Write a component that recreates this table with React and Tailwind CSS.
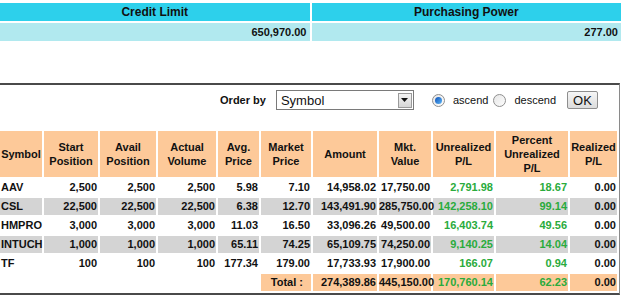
const rows = [
  ['AAV', '2,500', '2,500', '2,500', '5.98', '7.10', '14,958.02', '17,750.00', '2,791.98', '18.67', '0.00'],
  ['CSL', '22,500', '22,500', '22,500', '6.38', '12.70', '143,491.90', '285,750.00', '142,258.10', '99.14', '0.00'],
  ['HMPRO', '3,000', '3,000', '3,000', '11.03', '16.50', '33,096.26', '49,500.00', '16,403.74', '49.56', '0.00'],
  ['INTUCH', '1,000', '1,000', '1,000', '65.11', '74.25', '65,109.75', '74,250.00', '9,140.25', '14.04', '0.00'],
  ['TF', '100', '100', '100', '177.34', '179.00', '17,733.93', '17,900.00', '166.07', '0.94', '0.00'],
]

const headers = [
  ['Symbol'],
  ['Start', 'Position'],
  ['Avail', 'Position'],
  ['Actual', 'Volume'],
  ['Avg.', 'Price'],
  ['Market', 'Price'],
  ['Amount'],
  ['Mkt.', 'Value'],
  ['Unrealized', 'P/L'],
  ['Percent', 'Unrealized', 'P/L'],
  ['Realized', 'P/L'],
]

const widths = [42, 54, 56, 58, 41, 50, 64, 52, 61, 72, 47]

function Radio({ checked }) {
  return (
    <span className="flex h-[13px] w-[13px] items-center justify-center rounded-full border border-[#8f8f8f] bg-gradient-to-br from-[#e6e6e6] to-[#fdfdfd]">
      {checked && (
        <span className="h-[7px] w-[7px] rounded-full bg-gradient-to-br from-[#0f4fb8] to-[#5fb6f5]" />
      )}
    </span>
  )
}

export default function App() {
  return (
    <div className="w-[621px] bg-white pt-[3px] font-['Liberation_Sans',Arial,sans-serif] text-[#111]">
      <div className="grid grid-cols-2 gap-[2px] text-[12px] font-bold">
        <div className="flex h-[18px] items-center justify-center bg-[#2dd0eb]">Credit Limit</div>
        <div className="flex h-[18px] items-center justify-center bg-[#2dd0eb]">Purchasing Power</div>
        <div className="flex h-[18px] items-center justify-end bg-[#b1e9ef] pr-[3px] text-[11px]">650,970.00</div>
        <div className="flex h-[18px] items-center justify-end bg-[#b1e9ef] pr-[3px] text-[11px]">277.00</div>
      </div>

      <div className="mt-[42px] w-[620px] overflow-hidden border-t-2 border-r border-b-2 border-t-[#4a4a4a] border-r-[#8a8a8a] border-b-[#4a4a4a]">
        <div className="flex items-center justify-end pt-[5px] pr-[21px]">
          <span className="text-[11px] font-bold">Order by</span>
          <div className="ml-[10px] flex h-[20px] w-[138px] items-center border border-[#7a7a7a] bg-white pl-[4px] pr-[1px]">
            <span className="flex-1 text-[13px] leading-none">Symbol</span>
            <span className="flex h-[15px] w-[14px] items-center justify-center border border-[#9a9a9a] bg-gradient-to-b from-[#f4f4f4] to-[#d6d6d6]">
              <svg width="7" height="4" viewBox="0 0 7 4">
                <path d="M0 0h7L3.5 4z" fill="#111" />
              </svg>
            </span>
          </div>
          <span className="ml-[18px]"><Radio checked /></span>
          <span className="ml-[8px] text-[11px]">ascend</span>
          <span className="ml-[5px]"><Radio /></span>
          <span className="ml-[8px] text-[11px]">descend</span>
          <button className="ml-[11px] flex h-[18px] w-[31px] items-center justify-center rounded-[2px] border border-[#8e8e8e] bg-gradient-to-b from-[#f6f6f6] to-[#dcdcdc] text-[13px] leading-none">
            OK
          </button>
        </div>

        <table className="ml-[-2px] mt-[19px] w-[621px] table-fixed border-separate border-spacing-[2px] text-[11px] font-bold">
          <colgroup>
            {widths.map((w, i) => (
              <col key={i} style={{ width: w }} />
            ))}
          </colgroup>
          <thead>
            <tr className="h-[46px]">
              {headers.map((h, i) => (
                <th key={i} className="bg-[#fdc999] p-0 text-center leading-[14px] font-bold">
                  {h.map((l, j) => (
                    <div key={j}>{l}</div>
                  ))}
                </th>
              ))}
            </tr>
          </thead>
          <tbody>
            {rows.map((r, i) => (
              <tr key={r[0]} className={i % 2 === 1 ? 'h-[17px] bg-[#d4d4d4]' : 'h-[17px]'}>
                {r.map((v, j) => (
                  <td
                    key={j}
                    className={
                      j === 0
                        ? 'p-0 pl-[1px] text-left leading-none'
                        : j === 8 || j === 9
                        ? 'p-0 pr-[1px] text-right leading-none text-[#2aab3c]'
                        : 'p-0 pr-[1px] text-right leading-none'
                    }
                  >
                    {v}
                  </td>
                ))}
              </tr>
            ))}
            <tr className="h-[17px]">
              <td colSpan={5} className="p-0" />
              <td className="bg-[#fdc999] p-0 pr-[8px] text-right leading-none">Total :</td>
              <td className="bg-[#fdc999] p-0 pr-[1px] text-right leading-none">274,389.86</td>
              <td className="bg-[#fdc999] p-0 pr-[1px] text-right leading-none">445,150.00</td>
              <td className="bg-[#fdc999] p-0 pr-[1px] text-right leading-none text-[#2aab3c]">170,760.14</td>
              <td className="bg-[#fdc999] p-0 pr-[1px] text-right leading-none text-[#2aab3c]">62.23</td>
              <td className="bg-[#fdc999] p-0 pr-[1px] text-right leading-none">0.00</td>
            </tr>
          </tbody>
        </table>
      </div>
    </div>
  )
}
